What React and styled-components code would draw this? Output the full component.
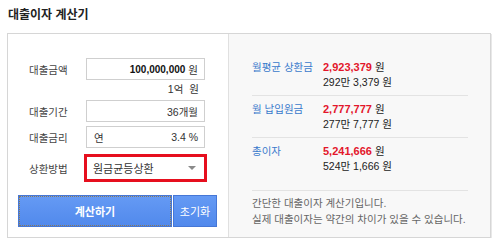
import styled, { createGlobalStyle } from 'styled-components';

const GlobalStyle = createGlobalStyle`
  body {
    margin: 0;
    background: #fff;
    font-family: "Liberation Sans", "Noto Sans CJK KR", sans-serif;
    color: #333;
  }
`;

const Page = styled.div`
  padding: 8px 0 0 7px;
`;

const Title = styled.h2`
  margin: 0 0 11px 1px;
  font-size: 12px;
  line-height: 14px;
  font-weight: bold;
  color: #222;
`;

const Box = styled.div`
  display: flex;
  width: 484px;
  height: 205px;
  box-sizing: border-box;
  border: 1px solid #d6d6d6;
  box-shadow: 1px 1px 0 #e8e8e8;
`;

const FormPanel = styled.div`
  width: 220px;
  box-sizing: border-box;
  padding: 24px 11px 10px 10px;
  display: flex;
  flex-direction: column;
  background: #fff;
`;

const Row = styled.div`
  display: flex;
  align-items: center;
  padding-left: 11px;
  margin-top: ${(p) => p.$gap || 0}px;
`;

const Label = styled.span`
  width: 57px;
  font-size: 10.5px;
  color: #444;
`;

const Field = styled.div`
  width: 119px;
  height: 22px;
  box-sizing: border-box;
  border: 1px solid #cfcfcf;
  display: flex;
  align-items: center;
  justify-content: ${(p) => (p.$split ? 'space-between' : 'flex-end')};
  padding: 0 6px 0 7px;
  font-size: 10.5px;
  color: #333;
`;

const Strong = styled.b`
  font-size: 10px;
  color: #111;
  margin-right: 3px;
`;

const SubText = styled.div`
  margin: 2px 0 4px 68px;
  width: 119px;
  box-sizing: border-box;
  padding-right: 6px;
  text-align: right;
  font-size: 10.5px;
  line-height: 14px;
  color: #333;

  span {
    margin-left: 6px;
  }
`;

const Select = styled.div`
  width: 123px;
  height: 28px;
  margin-left: -2px;
  box-sizing: border-box;
  border: 3px solid #e60f1e;
  display: flex;
  align-items: center;
  justify-content: space-between;
  padding: 0 8px 0 6px;
  font-size: 11px;
  color: #333;
  background: #fff;
`;

const Arrow = styled.i`
  width: 0;
  height: 0;
  border-left: 4px solid transparent;
  border-right: 4px solid transparent;
  border-top: 4px solid #8a8a8a;
`;

const Buttons = styled.div`
  display: flex;
  gap: 1px;
  margin-top: 13px;
`;

const Button = styled.button`
  height: 32px;
  flex: ${(p) => (p.$main ? '1' : '0 0 44px')};
  border: 1px solid #4677d6;
  background: linear-gradient(#659af4, #5189ec);
  color: #fff;
  font-family: inherit;
  font-size: 11px;
  font-weight: ${(p) => (p.$main ? 'bold' : 'normal')};
  padding: 0;
  outline: ${(p) => (p.$main ? '1px dotted #8c7a58' : 'none')};
  outline-offset: -2px;
`;

const ResultPanel = styled.div`
  flex: 1;
  border-left: 1px solid #e0e0e0;
  background: #f8f8f8;
  padding: 26px 22px 0 23px;
`;

const ResultRow = styled.div`
  display: grid;
  grid-template-columns: 71px 1fr;
  padding: ${(p) => (p.$last ? '0 0 16px' : '0 0 5px')};
  margin-top: ${(p) => (p.$first ? 0 : 6)}px;
  border-bottom: 1px solid #e3e3e3;
  font-size: 10.5px;
  line-height: 15px;
`;

const ResultLabel = styled.span`
  color: #3a7acc;
`;

const Value = styled.span`
  color: #222;

  b {
    font-size: 11px;
    color: #e3162b;
    margin-right: 3px;
  }
`;

const Note = styled.p`
  margin: 4px 0 0;
  font-size: 10.5px;
  line-height: 16px;
  color: #666;
`;

const results = [
  { label: '월평균 상환금', value: '2,923,379', sub: '292만 3,379 원' },
  { label: '월 납입원금', value: '2,777,777', sub: '277만 7,777 원' },
  { label: '총이자', value: '5,241,666', sub: '524만 1,666 원' },
];

const App = () => {
  return (
    <>
      <GlobalStyle />
      <Page>
        <Title>대출이자 계산기</Title>
        <Box>
          <FormPanel>
            <Row>
              <Label>대출금액</Label>
              <Field>
                <Strong>100,000,000</Strong>원
              </Field>
            </Row>
            <SubText>
              1억<span>원</span>
            </SubText>
            <Row>
              <Label>대출기간</Label>
              <Field>36개월</Field>
            </Row>
            <Row $gap={4}>
              <Label>대출금리</Label>
              <Field $split>
                <span>연</span>
                <span>3.4 %</span>
              </Field>
            </Row>
            <Row $gap={6}>
              <Label>상환방법</Label>
              <Select>
                원금균등상환
                <Arrow />
              </Select>
            </Row>
            <Buttons>
              <Button $main>계산하기</Button>
              <Button>초기화</Button>
            </Buttons>
          </FormPanel>
          <ResultPanel>
            {results.map((r, i) => (
              <ResultRow key={r.label} $first={i === 0} $last={i === results.length - 1}>
                <ResultLabel>{r.label}</ResultLabel>
                <Value>
                  <b>{r.value}</b>원
                </Value>
                <span />
                <Value>{r.sub}</Value>
              </ResultRow>
            ))}
            <Note>
              간단한 대출이자 계산기입니다.
              <br />
              실제 대출이자는 약간의 차이가 있을 수 있습니다.
            </Note>
          </ResultPanel>
        </Box>
      </Page>
    </>
  );
};

export default App;
